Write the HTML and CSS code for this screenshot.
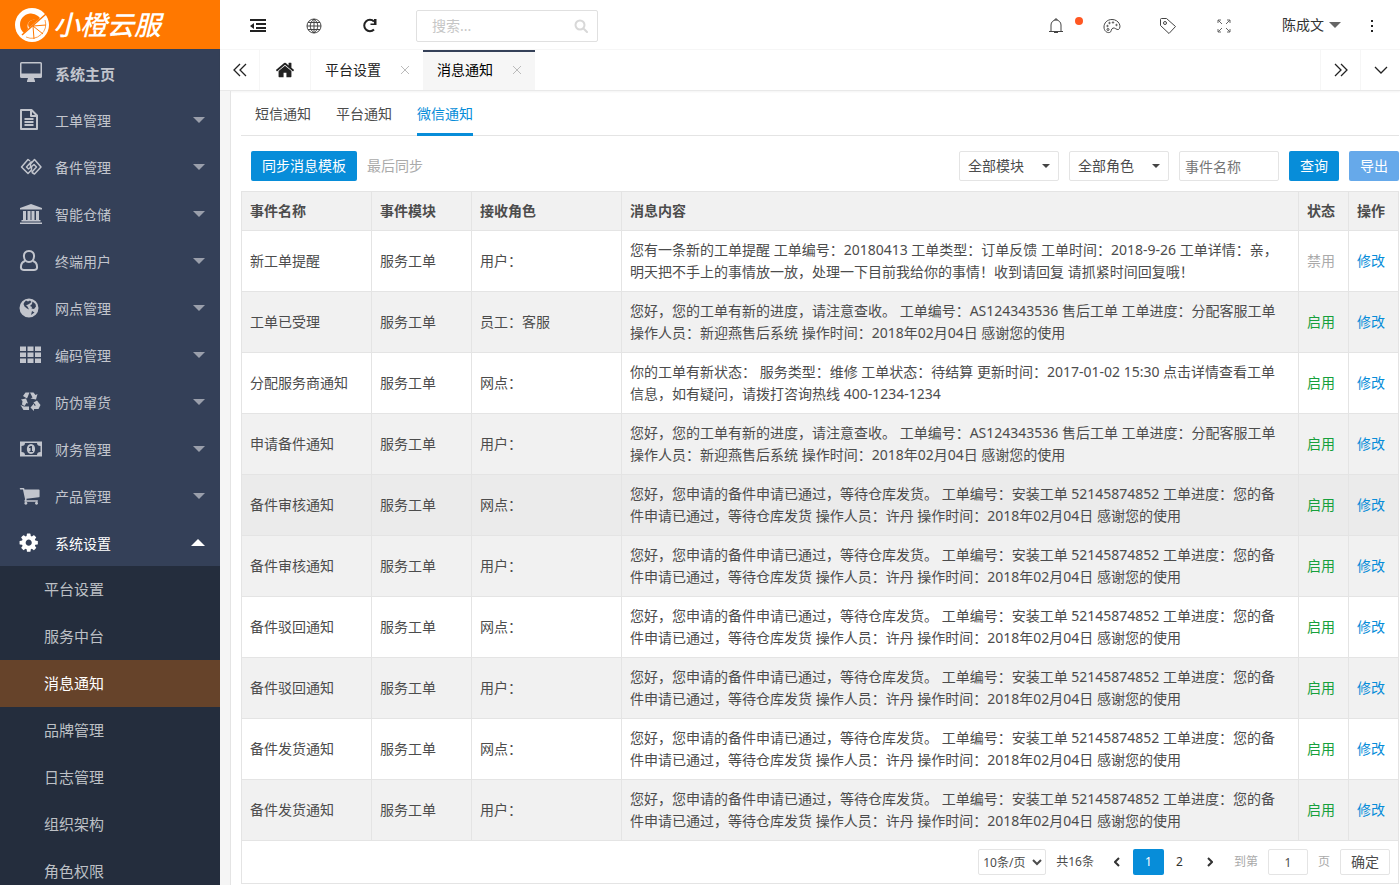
FILE: index.html
```html
<!DOCTYPE html>
<html lang="zh-CN">
<head>
  <meta charset="UTF-8">
  <meta name="viewport" content="width=device-width, initial-scale=1.0">
  <title>小橙云服</title>
  <link rel="stylesheet" href="styles.css">
</head>
<body>
  <!-- Sidebar -->
  <aside class="sidebar">
    <a class="logo" href="#">
      <svg class="logo-mark" viewBox="0 0 34 34" aria-hidden="true">
        <circle cx="17" cy="17" r="17" fill="#fff"/>
        <path d="M25 10L23 8A11 11 0 1 0 9 25L13 21Q11 14 17 12Q20 11 22 13Z" fill="#ff7800"/>
        <path d="M14 20Q11 14 17 12L24 11Z" fill="#ff7800"/>
        <path d="M7 27L31 6" fill="none" stroke="#ff7800" stroke-width="1.500"/>
        <path d="M30 12A14 14 0 0 1 11 29" fill="none" stroke="#ff7800" stroke-width=".7"/>
        <path d="M18 18L31 17M18 18L28 26M18 18L19 31" fill="none" stroke="#ff7800"/>
      </svg>
      <span>小橙云服</span>
    </a>

    <nav class="menu">
      <a class="menu-item strong" href="#">
        <svg class="icon" viewBox="0 0 24 22"><path fill-rule="evenodd" d="M2.500 0h19A1.500 1.500 0 0 1 23 1.500v13A1.500 1.500 0 0 1 21.500 16H15l1 3v1H8v-1l1-3H2.500A1.500 1.500 0 0 1 1 14.500v-13A1.500 1.500 0 0 1 2.500 0zM2.500 1.500v10h19v-10z"/></svg>
        <span>系统主页</span>
      </a>
      <a class="menu-item" href="#">
        <svg class="icon" viewBox="0 0 24 22"><path class="line" d="M2 1h10.500l5.500 5.500V20H2zM12 1v6h6M5.500 10h9M5.500 13h9M5.500 16h9"/></svg>
        <span>工单管理</span><i class="caret"></i>
      </a>
      <a class="menu-item" href="#">
        <svg class="icon" viewBox="0 0 24 22"><path class="line mid" d="M11 5L9 3.500L2.500 11L9 17.500L12.500 14V10.500L9.500 13L7.500 11L12.500 5.500M13 16.500L15.500 18L22 11L15.500 3.500L11.500 8V11.500L15 8.500L17.500 11L12.500 16.500"/></svg>
        <span>备件管理</span><i class="caret"></i>
      </a>
      <a class="menu-item" href="#">
        <svg class="icon" viewBox="0 0 24 22"><path d="M12 1L23 5v1.500H1V5zM4 8h3v9h1.500V8h3v9h1V8h3v9H17V8h3v9h1.500v1.500h-19V17H4zM1 19.500h22V21H1z"/></svg>
        <span>智能仓储</span><i class="caret"></i>
      </a>
      <a class="menu-item" href="#">
        <svg class="icon" viewBox="0 0 24 22"><path class="line" d="M6 11Q1.500 12.500 2 18Q2.500 20 5 20H15Q17.500 20 18 18Q18.500 12.500 14 11M10 1C2.500 1 4 12 10 12S17.500 1 10 1Z"/></svg>
        <span>终端用户</span><i class="caret"></i>
      </a>
      <a class="menu-item" href="#">
        <svg class="icon" viewBox="0 0 24 22"><path fill-rule="evenodd" d="M10 1.500A9.500 9.500 0 1 1 10 20.500A9.500 9.500 0 0 1 10 1.500zM7 3.500Q5 5 4.500 7L5.500 9.500L8 11.500L10 12.500L8.500 9.500L7 8.500L10 7L12.500 5L11 3.500L9 4.500zM13.500 4.500L13 7L11 9L13 10L12.500 11.500L15 12L17 9.500Q16.500 6 13.500 4.500zM13 14L12 18L15.500 15.500z"/></svg>
        <span>网点管理</span><i class="caret"></i>
      </a>
      <a class="menu-item" href="#">
        <svg class="icon" viewBox="0 0 24 22"><path d="M1 2.500h6v4.500H1zM8.500 2.500h6v4.500h-6zM16 2.500h6v4.500h-6zM1 8.500h6v4.500H1zM8.500 8.500h6v4.500h-6zM16 8.500h6v4.500h-6zM1 14.500h6v4.500H1zM8.500 14.500h6v4.500h-6zM16 14.500h6v4.500h-6z"/></svg>
        <span>编码管理</span><i class="caret"></i>
      </a>
      <a class="menu-item" href="#">
        <svg class="icon" viewBox="0 0 24 22"><path d="M6.500 1.500H10.500L8 7.500L4 5zM11 1.500H14.500L16.500 4L18.500 3L17 8.500L11.500 7.500L13.500 6.500zM18 9.500L21.500 14L19.500 18H15V20L11.500 16.500L15 12.500V14.500H17L14.500 11.500zM2 8.500L7 7.500L9 12.500L7.500 12L5.500 15L3 13.500L3.500 10zM5 15.500H10V19H4.500L1.500 14z"/></svg>
        <span>防伪窜货</span><i class="caret"></i>
      </a>
      <a class="menu-item" href="#">
        <svg class="icon" viewBox="0 0 24 22"><path fill-rule="evenodd" d="M1 3.500h22v15H1zM6 5Q6 8 2.500 8v6Q6 14 6 17h12q0-3 3.500-3v-6Q18 8 18 5z"/><path fill-rule="evenodd" d="M12 6C6.500 6 6.500 16 12 16S17.500 6 12 6zM11.500 8H13V13H14V14H10.500V13H11.500V10H10V9z"/></svg>
        <span>财务管理</span><i class="caret"></i>
      </a>
      <a class="menu-item" href="#">
        <svg class="icon" viewBox="0 0 2016 1848"><path d="M704 1536q0 52-38 90t-90 38-90-38-38-90 38-90 90-38 90 38 38 90zm896 0q0 52-38 90t-90 38-90-38-38-90 38-90 90-38 90 38 38 90zm128-1088v512q0 24-16.500 42.500t-40.500 21.500l-1044 122q13 60 13 70 0 16-24 64h920q26 0 45 19t19 45-19 45-45 19h-1024q-26 0-45-19t-19-45q0-11 8-31.500t16-36 21.500-40 15.500-29.500l-177-823h-204q-26 0-45-19t-19-45 19-45 45-19h256q16 0 28.500 6.500t19.500 15.500 13 24.500 8 26 5.500 29.500 4.500 26h1201q26 0 45 19t19 45z"/></svg>
        <span>产品管理</span><i class="caret"></i>
      </a>
      <a class="menu-item open" href="#">
        <svg class="icon" viewBox="80 0 2016 1848"><path d="M1152 896q0-106-75-181t-181-75-181 75-75 181 75 181 181 75 181-75 75-181zm512-109v222q0 12-8 23t-20 13l-185 28q-19 54-39 91 35 50 107 138 10 12 10 25t-9 23q-27 37-99 108t-94 71q-12 0-26-9l-138-108q-44 23-91 38-16 136-29 186-7 28-36 28h-222q-14 0-24.500-8.500t-11.500-21.500l-28-184q-49-16-90-37l-141 107q-10 9-25 9-14 0-25-11-126-114-165-168-7-10-7-23 0-12 8-23 15-21 51-66.500t54-70.500q-27-50-41-99l-183-27q-13-2-21-12.500t-8-23.500v-222q0-12 8-23t19-13l186-28q14-46 39-92-40-57-107-138-10-12-10-24 0-10 9-23 26-36 98.500-107.500t94.500-71.500q13 0 26 10l138 107q44-23 91-38 16-136 29-186 7-28 36-28h222q14 0 24.500 8.500t11.500 21.500l28 184q49 16 90 37l142-107q9-9 24-9 13 0 25 10 129 119 165 170 7 8 7 22 0 12-8 23-15 21-51 66.500t-54 70.500q26 50 41 98l183 28q13 2 21 12.500t8 23.500z"/></svg>
        <span>系统设置</span><i class="caret up"></i>
      </a>
      <div class="submenu">
        <a href="#">平台设置</a>
        <a href="#">服务中台</a>
        <a class="active" href="#">消息通知</a>
        <a href="#">品牌管理</a>
        <a href="#">日志管理</a>
        <a href="#">组织架构</a>
        <a href="#">角色权限</a>
      </div>
    </nav>
  </aside>

  <div class="main">
    <!-- Top bar -->
    <header class="topbar">
      <button class="tool" aria-label="收起菜单">
        <svg width="16" height="16" viewBox="0 0 16 16"><path d="M0 1h16v2H0zM6 5h10v2H6zM6 9h10v2H6zM0 12h16v2H0zM0 8l4-3v6z"/></svg>
      </button>
      <button class="tool" aria-label="网站">
        <svg class="thin" width="16" height="16" viewBox="0 0 16 16"><path d="M8 1a7 7 0 1 0 0 14a7 7 0 1 0 0-14zM8 1C3 5 3 11 8 15C13 11 13 5 8 1zM8 1v14M1 8h14M2 4.500h12M2 11.500h12"/></svg>
      </button>
      <button class="tool" aria-label="刷新">
        <svg width="16" height="16" viewBox="0 0 16 16"><path d="M12 11.500A5.700 5.700 0 1 1 12 3.500" fill="none" stroke="#222" stroke-width="2"/><path d="M14.500 1v6H8.500V5.500H12V1z"/></svg>
      </button>
      <label class="search">
        <input type="text" placeholder="搜索..." aria-label="搜索">
        <svg width="14" height="14" viewBox="0 0 14 14"><path d="M10 10L13 13M6 1.500a4.500 4.500 0 1 0 0 9a4.500 4.500 0 1 0 0-9" fill="none" stroke="#d8d8d8" stroke-width="2" stroke-linecap="round"/></svg>
      </label>

      <div class="topbar-right">
        <button class="tool" aria-label="消息">
          <svg class="thin" width="16" height="16" viewBox="0 0 16 16"><path d="M1 13.500h14M3 13V7a5 5 0 0 1 10 0v6M7 2V1h2v1M6 14.500h4"/></svg>
          <span class="dot"></span>
        </button>
        <button class="tool" aria-label="主题">
          <svg class="thin" width="18" height="16" viewBox="0 0 18 16"><path d="M9 1.500C4 1.500 1 5 1 9c0 4 3 6 5.500 5.500C9 14 7.500 11 10 10c2-.500 3.500 2 5.500 1.500C19 9 16 1.500 9 1.500z"/><circle cx="4.500" cy="8" r=".7"/><circle cx="6.500" cy="5" r=".7"/><circle cx="10" cy="4.500" r=".7"/><circle cx="13.500" cy="7" r=".7"/><circle cx="5" cy="11.500" r="1"/></svg>
        </button>
        <button class="tool" aria-label="便签">
          <svg class="thin" width="18" height="18" viewBox="0 0 18 18"><path d="M1.500 2.500Q1.500 1.500 2.500 1.500H7.500L16.500 9.500L10 16.500L1.500 8.500z"/><circle cx="6" cy="6" r="1.500"/></svg>
        </button>
        <button class="tool" aria-label="全屏">
          <svg class="thin soft" width="14" height="14" viewBox="0 0 14 14"><path d="M5 5L1 1M1 4V1h3M9 5l4-4M10 1h3v3M5 9l-4 4M1 10v3h3M9 9l4 4M13 10v3h-3"/></svg>
        </button>
        <a class="user" href="#">陈成文<i class="caret dark"></i></a>
        <button class="tool" aria-label="更多">
          <svg width="4" height="14" viewBox="0 0 4 14"><path d="M1 1h2v2H1zM1 6h2v2H1zM1 11h2v2H1z"/></svg>
        </button>
      </div>
    </header>

    <!-- Page tabs -->
    <div class="pagetabs">
      <button class="tab-arrow left" aria-label="向左">
        <svg class="arrow" width="14" height="14" viewBox="0 0 14 14"><path d="M7 1L1 7l6 6M13 1L7 7l6 6"/></svg>
      </button>
      <a class="tab-home" href="#" aria-label="主页">
        <svg width="20" height="20" viewBox="0 0 1792 1792"><path d="M1472 992v480q0 26-19 45t-45 19h-384v-384h-256v384h-384q-26 0-45-19t-19-45v-480q0-1 .500-3t.500-3l575-474 575 474q1 2 1 6zm223-69l-62 74q-8 9-21 11h-3q-13 0-21-7l-692-577-692 577q-12 8-24 7-13-2-21-11l-62-74q-8-10-7-23.500t11-21.500l719-599q32-26 76-26t76 26l244 204v-195q0-14 9-23t23-9h192q14 0 23 9t9 23v408l219 182q10 8 11 21.500t-7 23.500z"/></svg>
      </a>
      <a class="tab" href="#">平台设置
        <svg class="close" width="8" height="8" viewBox="0 0 8 8"><path d="M0 0l8 8M8 0L0 8"/></svg>
      </a>
      <a class="tab active" href="#">消息通知
        <svg class="close" width="8" height="8" viewBox="0 0 8 8"><path d="M0 0l8 8M8 0L0 8"/></svg>
      </a>
      <button class="tab-arrow right" aria-label="向右">
        <svg class="arrow" width="14" height="14" viewBox="0 0 14 14"><path d="M1 1l6 6l-6 6M7 1l6 6l-6 6"/></svg>
      </button>
      <button class="tab-arrow" aria-label="展开">
        <svg class="arrow" width="14" height="14" viewBox="0 0 14 14"><path d="M1 4l6 6l6-6"/></svg>
      </button>
    </div>

    <!-- Content -->
    <main class="content">
      <nav class="subtabs">
        <a href="#">短信通知</a>
        <a href="#">平台通知</a>
        <a class="active" href="#">微信通知</a>
      </nav>

      <form class="toolbar">
        <button type="button" class="btn">同步消息模板</button>
        <span class="hint">最后同步</span>
        <select class="filter" aria-label="模块"><option>全部模块</option></select>
        <select class="filter" aria-label="角色"><option>全部角色</option></select>
        <input class="filter-input" type="text" placeholder="事件名称" aria-label="事件名称">
        <button type="button" class="btn">查询</button>
        <button type="button" class="btn light">导出</button>
      </form>

      <table class="list">
        <colgroup>
          <col class="col-name"><col class="col-module"><col class="col-role"><col><col class="col-small"><col class="col-small">
        </colgroup>
        <thead>
          <tr><th>事件名称</th><th>事件模块</th><th>接收角色</th><th>消息内容</th><th>状态</th><th>操作</th></tr>
        </thead>
        <tbody>
          <tr>
            <td>新工单提醒</td><td>服务工单</td><td>用户：</td>
            <td class="msg">您有一条新的工单提醒 工单编号：20180413 工单类型：订单反馈 工单时间：2018-9-26 工单详情：亲，明天把不手上的事情放一放，处理一下目前我给你的事情！收到请回复 请抓紧时间回复哦！</td>
            <td class="off">禁用</td><td><a href="#">修改</a></td>
          </tr>
          <tr>
            <td>工单已受理</td><td>服务工单</td><td>员工：客服</td>
            <td class="msg">您好，您的工单有新的进度，请注意查收。 工单编号：AS124343536 售后工单 工单进度：分配客服工单 操作人员：新迎燕售后系统 操作时间：2018年02月04日 感谢您的使用</td>
            <td class="on">启用</td><td><a href="#">修改</a></td>
          </tr>
          <tr>
            <td>分配服务商通知</td><td>服务工单</td><td>网点：</td>
            <td class="msg">你的工单有新状态： 服务类型：维修 工单状态：待结算 更新时间：2017-01-02 15:30 点击详情查看工单信息，如有疑问，请拨打咨询热线 400-1234-1234</td>
            <td class="on">启用</td><td><a href="#">修改</a></td>
          </tr>
          <tr>
            <td>申请备件通知</td><td>服务工单</td><td>用户：</td>
            <td class="msg">您好，您的工单有新的进度，请注意查收。 工单编号：AS124343536 售后工单 工单进度：分配客服工单 操作人员：新迎燕售后系统 操作时间：2018年02月04日 感谢您的使用</td>
            <td class="on">启用</td><td><a href="#">修改</a></td>
          </tr>
          <tr class="hover">
            <td>备件审核通知</td><td>服务工单</td><td>网点：</td>
            <td class="msg">您好，您申请的备件申请已通过，等待仓库发货。 工单编号：安装工单 52145874852 工单进度：您的备件申请已通过，等待仓库发货 操作人员：许丹 操作时间：2018年02月04日 感谢您的使用</td>
            <td class="on">启用</td><td><a href="#">修改</a></td>
          </tr>
          <tr>
            <td>备件审核通知</td><td>服务工单</td><td>用户：</td>
            <td class="msg">您好，您申请的备件申请已通过，等待仓库发货。 工单编号：安装工单 52145874852 工单进度：您的备件申请已通过，等待仓库发货 操作人员：许丹 操作时间：2018年02月04日 感谢您的使用</td>
            <td class="on">启用</td><td><a href="#">修改</a></td>
          </tr>
          <tr>
            <td>备件驳回通知</td><td>服务工单</td><td>网点：</td>
            <td class="msg">您好，您申请的备件申请已通过，等待仓库发货。 工单编号：安装工单 52145874852 工单进度：您的备件申请已通过，等待仓库发货 操作人员：许丹 操作时间：2018年02月04日 感谢您的使用</td>
            <td class="on">启用</td><td><a href="#">修改</a></td>
          </tr>
          <tr>
            <td>备件驳回通知</td><td>服务工单</td><td>用户：</td>
            <td class="msg">您好，您申请的备件申请已通过，等待仓库发货。 工单编号：安装工单 52145874852 工单进度：您的备件申请已通过，等待仓库发货 操作人员：许丹 操作时间：2018年02月04日 感谢您的使用</td>
            <td class="on">启用</td><td><a href="#">修改</a></td>
          </tr>
          <tr>
            <td>备件发货通知</td><td>服务工单</td><td>网点：</td>
            <td class="msg">您好，您申请的备件申请已通过，等待仓库发货。 工单编号：安装工单 52145874852 工单进度：您的备件申请已通过，等待仓库发货 操作人员：许丹 操作时间：2018年02月04日 感谢您的使用</td>
            <td class="on">启用</td><td><a href="#">修改</a></td>
          </tr>
          <tr>
            <td>备件发货通知</td><td>服务工单</td><td>用户：</td>
            <td class="msg">您好，您申请的备件申请已通过，等待仓库发货。 工单编号：安装工单 52145874852 工单进度：您的备件申请已通过，等待仓库发货 操作人员：许丹 操作时间：2018年02月04日 感谢您的使用</td>
            <td class="on">启用</td><td><a href="#">修改</a></td>
          </tr>
        </tbody>
      </table>

      <div class="pager">
        <select class="page-size" aria-label="每页条数"><option>10条/页</option></select>
        <span class="total">共16条</span>
        <a class="page" href="#" aria-label="上一页"><svg width="6" height="10" viewBox="0 0 6 10"><path d="M5 1L1 5l4 4"/></svg></a>
        <a class="page current" href="#">1</a>
        <a class="page" href="#">2</a>
        <a class="page" href="#" aria-label="下一页"><svg width="6" height="10" viewBox="0 0 6 10"><path d="M1 1l4 4l-4 4"/></svg></a>
        <label class="jump">到第 <input type="text" value="1"> 页</label>
        <button class="confirm">确定</button>
      </div>
    </main>
  </div>
</body>
</html>
```
FILE: styles.css
```css
/* Reset & Base */
* { box-sizing: border-box; margin: 0; padding: 0; }
body {
  display: flex;
  height: 100vh;
  overflow: hidden;
  font: 14px/22px "Noto Sans", "Noto Sans CJK SC", sans-serif;
  color: #4c4c4c;
  background: #fff;
}
a { text-decoration: none; color: inherit; }
button, input, select { font: inherit; color: inherit; }
button { border: none; background: none; cursor: pointer; }
svg { display: block; }

/* Sidebar */
.sidebar {
  flex: 0 0 220px;
  background: #344058;
  color: #c2c5cd;
  overflow: hidden;
}
.logo {
  display: flex;
  align-items: center;
  gap: 4px;
  height: 49px;
  padding-left: 15px;
  background: #ff7800;
  color: #fff;
  font-size: 27px;
  font-style: italic;
  font-weight: 500;
  line-height: 48px;
}
.logo-mark { width: 34px; height: 34px; }
.menu-item {
  display: flex;
  align-items: center;
  height: 47px;
  padding: 0 15px 0 19px;
}
.menu-item span { flex: 1; margin-left: 12px; padding-top: 2px; }
.menu-item.strong { font-size: 15px; font-weight: bold; }
.menu-item.open { color: #fff; }
.icon { width: 24px; height: 22px; fill: currentColor; }
.icon .line { fill: none; stroke: currentColor; stroke-width: 2; stroke-linejoin: round; }
.icon .mid { stroke-width: 1.5; }
.caret {
  border: 6px solid transparent;
  border-top-color: #9a9fab;
  border-bottom-width: 0;
}
.caret.up {
  border-width: 0 7px 7px;
  border-bottom-color: #fff;
}
.caret.dark { border-top-color: #666; }
.submenu { background: #242d3d; color: #bdc0c5; font-size: 15px; }
.submenu a { display: block; padding-left: 44px; line-height: 47px; }
.submenu .active { background: #66432a; color: #fff; }

/* Top bar */
.main { flex: 1; min-width: 0; display: flex; flex-direction: column; }
.topbar {
  display: flex;
  align-items: center;
  height: 50px;
  padding-left: 10px;
  border-bottom: 1px solid #f6f6f6;
  color: #333;
}
.tool {
  position: relative;
  display: flex;
  align-items: center;
  justify-content: center;
  width: 56px;
  height: 49px;
  padding-top: 3px;
}
.tool svg { fill: #222; }
.tool .thin { fill: none; stroke: #444; }
.tool .soft { stroke: #666; }
.dot {
  position: absolute;
  top: 17px;
  right: 1px;
  width: 8px;
  height: 8px;
  border-radius: 50%;
  background: #ff5722;
}
.search {
  display: flex;
  align-items: center;
  width: 182px;
  height: 32px;
  margin: 3px 0 0 18px;
  padding: 0 9px 0 15px;
  border: 1px solid #e0e0e0;
  border-radius: 2px;
}
.search input { flex: 1; min-width: 0; border: none; outline: none; }
.search input::placeholder { color: #c6c6c6; }
.topbar-right { display: flex; align-items: center; margin-left: auto; }
.user { display: flex; align-items: center; gap: 5px; padding: 0 3px 0 30px; }

/* Page tabs */
.pagetabs {
  display: flex;
  height: 41px;
  border-bottom: 1px solid #e9e9e9;
  box-shadow: 0 1px 2px rgba(0,0,0,.05);
  color: #222;
}
.tab-arrow {
  display: flex;
  align-items: center;
  justify-content: center;
  width: 40px;
  border-left: 1px solid #f6f6f6;
}
.tab-arrow.left { width: 39px; border-left: none; }
.tab-arrow.right { margin-left: auto; }
.arrow { fill: none; stroke: #222; stroke-width: 1.3; }
.tab-home {
  display: flex;
  align-items: center;
  justify-content: center;
  width: 52px;
  border-left: 1px solid #f6f6f6;
  border-right: 1px solid #f6f6f6;
}
.tab-home svg { fill: #222; }
.tab {
  display: flex;
  align-items: center;
  gap: 20px;
  width: 112px;
  padding-left: 14px;
}
.tab.active { background: #f6f6f6; color: #000; box-shadow: inset 0 2px #344058; }
.close { fill: none; stroke: #bbb; }

/* Content */
.content {
  flex: 1;
  min-height: 0;
  padding: 0 1px 0 10px;
  border-left: 1px solid #e4e4e4;
  margin-left: 10px;
  box-shadow: -10px 0 #f5f5f5;
}
.subtabs {
  display: flex;
  gap: 25px;
  height: 45px;
  padding-left: 14px;
  border-bottom: 1px solid #e4e4e4;
  line-height: 45px;
}
.subtabs .active { height: 45px; color: #078dd9; border-bottom: 3px solid #078dd9; }
.toolbar {
  display: flex;
  align-items: center;
  gap: 10px;
  padding: 15px 0 10px 10px;
}
.btn {
  height: 30px;
  padding: 0 11px;
  border-radius: 2px;
  background: #078dd9;
  color: #fff;
}
.btn.light { background: #66a9ea; }
.hint { margin-right: auto; color: #aaa; }
.filter, .filter-input {
  width: 100px;
  height: 30px;
  border: 1px solid #e4e4e4;
  border-radius: 2px;
  background: #fff;
}
.filter {
  appearance: none;
  padding: 0 8px;
  background: #fff url("data:image/svg+xml,%3Csvg xmlns='http://www.w3.org/2000/svg' width='8' height='4'%3E%3Cpath d='M0 0h8L4 4z' fill='%23444'/%3E%3C/svg%3E") no-repeat right 8px center;
}
.filter-input { padding: 0 5px; }
.filter-input::placeholder { color: #757575; }

/* Table */
.list { width: 100%; border-collapse: collapse; table-layout: fixed; }
.list th, .list td {
  padding: 8px;
  border: 1px solid #e4e4e4;
  text-align: left;
}
.list th { background: #f1f1f1; }
.list .msg { padding-right: 16px; }
.list tr:nth-child(even) td { background: #f1f1f1; }
.list .hover td { background: #ebebeb; }
.list a { color: #078dd9; }
.list .on { color: #16a03c; }
.list .off { color: #aaa; }
.col-name { width: 130px; }
.col-module { width: 100px; }
.col-role { width: 150px; }
.col-small { width: 50px; }

/* Pager */
.pager {
  display: flex;
  align-items: center;
  justify-content: flex-end;
  height: 43px;
  padding-right: 8px;
  border: 1px solid #e4e4e4;
  border-top: none;
  font-size: 12px;
}
.page-size {
  width: 68px;
  height: 26px;
  border: 1px solid #e4e4e4;
  border-radius: 2px;
  background: #fff;
}
.total { margin: 0 8px 0 10px; }
.page {
  display: flex;
  align-items: center;
  justify-content: center;
  width: 31px;
  height: 26px;
  color: #333;
}
.page svg { fill: none; stroke: #333; stroke-width: 2; }
.page.current { border-radius: 2px; background: #078dd9; color: #fff; }
.jump { display: flex; align-items: center; gap: 10px; margin: 0 10px 0 8px; color: #aaa; }
.jump input {
  width: 40px;
  height: 26px;
  border: 1px solid #e4e4e4;
  border-radius: 2px;
  color: #4c4c4c;
  text-align: center;
}
.confirm {
  width: 50px;
  height: 26px;
  border: 1px solid #e4e4e4;
  border-radius: 2px;
  font-size: 14px;
}
```
